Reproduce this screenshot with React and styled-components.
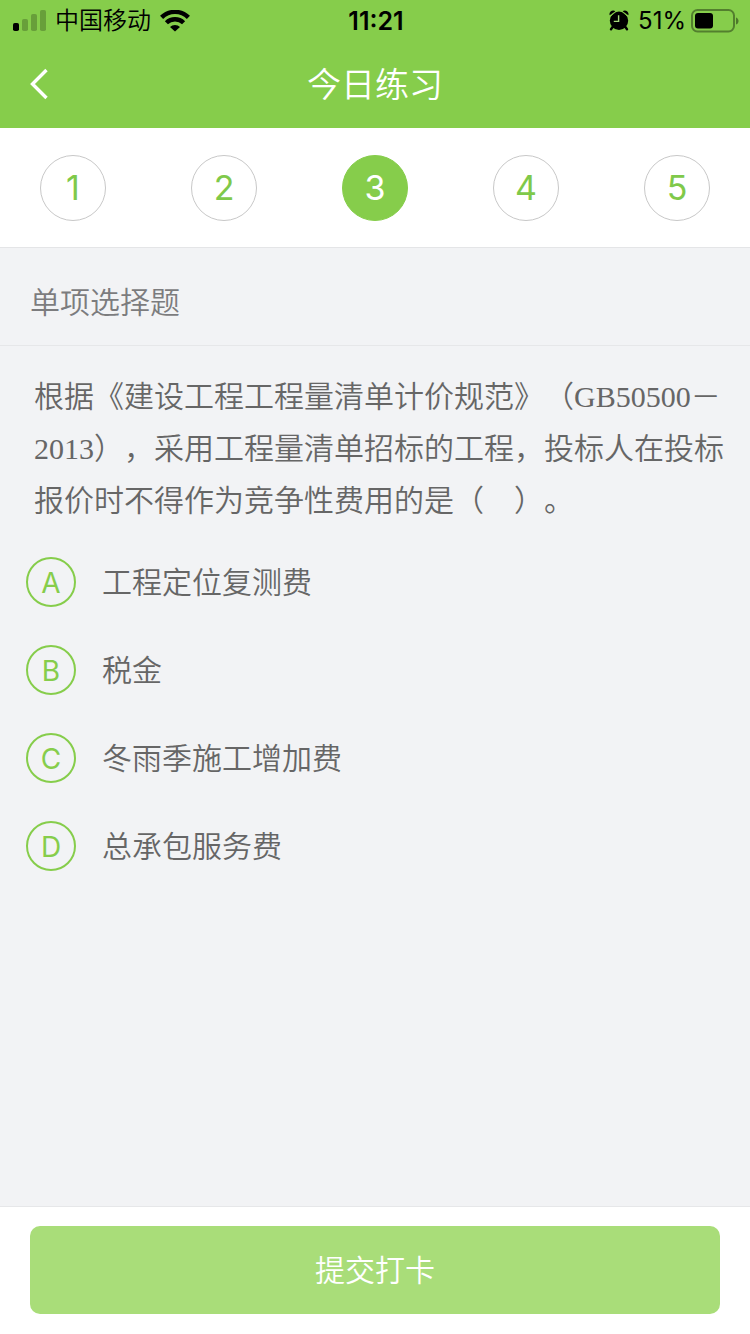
import { useState } from 'react';
import styled, { createGlobalStyle } from 'styled-components';

const GlobalStyle = createGlobalStyle`
  * {
    box-sizing: border-box;
  }
  body {
    margin: 0;
    font-family: Inter, "Noto Sans CJK SC", sans-serif;
    font-weight: 350;
    background-color: #f2f3f5;
  }
  button {
    font: inherit;
    border: none;
    padding: 0;
    cursor: pointer;
  }
`
const Page = styled.div`
  min-height: 100vh;
  display: flex;
  flex-direction: column;
`
const Header = styled.header`
  background-color: #86cd4b;
`
const StatusBar = styled.div`
  height: 40px;
  padding: 0 11px 0 13px;
  display: grid;
  grid-template-columns: 1fr auto 1fr;
  align-items: center;
  font-size: 24px;
  line-height: 42px;
  color: #000;
`
const StatusGroup = styled.div`
  display: flex;
  align-items: center;
  justify-content: ${(props) => props.$end ? 'flex-end' : 'flex-start'};
  gap: ${(props) => props.$end ? '5px' : '9px'};
`
const Percent = styled.span`
  margin-left: 4px;
  font-weight: 400;
`
const Time = styled.span`
  font-size: 25px;
  font-weight: 600;
`
const TitleBar = styled.div`
  height: 88px;
  padding: 0 20px;
  display: grid;
  grid-template-columns: 1fr auto 1fr;
  align-items: center;
`
const BackButton = styled.button`
  width: 40px;
  height: 60px;
  background: none;
  display: flex;
  align-items: center;
  justify-content: center;
`
const Title = styled.h1`
  margin: 0;
  padding-top: 2px;
  font-size: 34px;
  font-weight: 350;
  line-height: 48px;
  color: #fff;
`
const Steps = styled.nav`
  height: 120px;
  padding: 0 40px;
  display: flex;
  align-items: center;
  justify-content: space-between;
  background-color: #fff;
  border-bottom: 1px solid #e4e5e7;
`
const Step = styled.button`
  && {
    width: 66px;
    height: 66px;
    border: 1px solid ${(props) => props.$active ? '#86cd4b' : '#c8c8c8'};
    border-radius: 50%;
    background-color: ${(props) => props.$active ? '#86cd4b' : '#fff'};
    color: ${(props) => props.$active ? '#fff' : '#7fc94a'};
    font-size: 34px;
    font-weight: 400;
  }
`
const SectionTitle = styled.h2`
  margin: 0;
  padding: 30px 30px 19px;
  font-size: 30px;
  font-weight: 350;
  line-height: 48px;
  color: #7c7c7e;
  border-bottom: 1px solid #e6e7e9;
`
const Main = styled.main`
  flex: 1;
`
const Question = styled.p`
  margin: 0;
  padding: 25px 22px 0 34px;
  font-family: "Liberation Serif", "Noto Sans CJK SC", serif;
  font-size: 30px;
  line-height: 52px;
  color: #666;
  text-spacing-trim: space-all;
`
const Options = styled.div`
  padding: 30px 26px;
  display: flex;
  flex-direction: column;
  gap: 38px;
`
const Option = styled.label`
  display: flex;
  align-items: center;
  gap: 26px;
  font-size: 30px;
  line-height: 50px;
  color: #666;
  cursor: pointer;
`
const Letter = styled.span`
  width: 50px;
  height: 50px;
  border: 2px solid #86cd4b;
  border-radius: 50%;
  color: #86cd4b;
  font-size: 28px;
  font-weight: 400;
  line-height: 48px;
  text-align: center;
`
const Radio = styled.input`
  position: absolute;
  opacity: 0;
  pointer-events: none;

  &:checked + ${Letter} {
    background-color: #86cd4b;
    color: #fff;
  }
`
const Footer = styled.footer`
  padding: 19px 30px 20px;
  background-color: #fff;
  border-top: 1px solid #e6e7e9;
`
const Submit = styled.button`
  && {
    width: 100%;
    height: 88px;
    padding-bottom: 4px;
    border-radius: 10px;
    background-color: #a9dd79;
    color: #fff;
    font-size: 30px;
  }
`

const steps = [1, 2, 3, 4, 5];

const options = [
  { key: 'A', text: '工程定位复测费' },
  { key: 'B', text: '税金' },
  { key: 'C', text: '冬雨季施工增加费' },
  { key: 'D', text: '总承包服务费' },
];

const SignalIcon = () => (
  <svg width="33" height="22" viewBox="0 0 33 22">
    <rect x="0" y="13" width="6" height="8" rx="1.8" />
    <g opacity="0.22">
      <rect x="9" y="9" width="6" height="12" rx="1.8" />
      <rect x="18" y="4" width="6" height="17" rx="1.8" />
      <rect x="27" y="0" width="6" height="21" rx="1.8" />
    </g>
  </svg>
);

const WifiIcon = () => (
  <svg width="30" height="22" viewBox="0 0 30 22">
    <g fill="none" stroke="#000" strokeWidth="4.4">
      <path d="M1.6 7.4a19 19 0 0 1 26.8 0" />
      <path d="M6.4 12.8a12.2 12.2 0 0 1 17.2 0" />
    </g>
    <path d="M10 17a7 7 0 0 1 10 0L15 21.6z" />
  </svg>
);

const AlarmIcon = () => (
  <svg width="20" height="22" viewBox="0 0 20 22">
    <circle cx="10" cy="10.8" r="9.2" />
    <path d="M.7 5.2C-.6 2 3.6-1 6.4 1.2zM19.3 5.2C20.6 2 16.4-1 13.6 1.2z" />
    <path d="M3.6 17l-1.6 2.2M16.4 17l1.6 2.2" stroke="#000" strokeWidth="2.4" strokeLinecap="round" />
    <path d="M1.6 6.2L7 1.4M18.4 6.2L13 1.4" stroke="#86cd4b" strokeWidth="0.9" />
    <path d="M9.6 5.2V11.4H4.8" fill="none" stroke="#a6d97c" strokeWidth="1.4" />
  </svg>
);

const BatteryIcon = () => (
  <svg width="48" height="24" viewBox="0 0 48 24">
    <rect x="1" y="1" width="42" height="21.5" rx="5.5" fill="none" stroke="#000" strokeOpacity="0.38" strokeWidth="2" />
    <rect x="4" y="4" width="18" height="15.5" rx="3" />
    <path d="M45 8.5c3.4 1 3.4 6 0 7z" fillOpacity="0.42" />
  </svg>
);

const App = () => {
  const [current, setCurrent] = useState(3);

  return (
    <Page>
      <GlobalStyle />
      <Header>
        <StatusBar>
          <StatusGroup>
            <SignalIcon />
            <span>中国移动</span>
            <WifiIcon />
          </StatusGroup>
          <Time>11:21</Time>
          <StatusGroup $end>
            <AlarmIcon />
            <Percent>51%</Percent>
            <BatteryIcon />
          </StatusGroup>
        </StatusBar>
        <TitleBar>
          <BackButton aria-label="返回">
            <svg width="20" height="32" viewBox="0 0 20 32">
              <path d="M16.5 2L2.5 16L16.5 30" fill="none" stroke="#fff" strokeWidth="3.4" />
            </svg>
          </BackButton>
          <Title>今日练习</Title>
        </TitleBar>
      </Header>
      <Steps>
        {steps.map((n) => (
          <Step key={n} $active={n === current} onClick={() => setCurrent(n)}>{n}</Step>
        ))}
      </Steps>
      <Main>
        <SectionTitle>单项选择题</SectionTitle>
        <Question>
          根据《建设工程工程量清单计价规范》（GB50500－2013），采用工程量清单招标的工程，投标人在投标报价时不得作为竞争性费用的是（　）。
        </Question>
        <Options>
          {options.map((o) => (
            <Option key={o.key}>
              <Radio type="radio" name="answer" value={o.key} />
              <Letter>{o.key}</Letter>
              {o.text}
            </Option>
          ))}
        </Options>
      </Main>
      <Footer>
        <Submit>提交打卡</Submit>
      </Footer>
    </Page>
  );
};

export default App;
